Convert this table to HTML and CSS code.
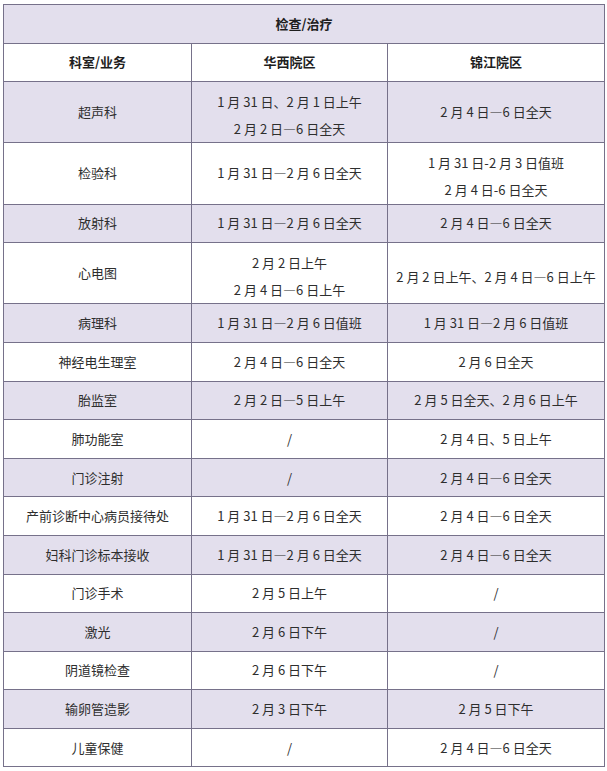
FILE: index.html
```html
<!DOCTYPE html>
<html lang="zh-CN">
<head>
<meta charset="utf-8">
<title>检查/治疗</title>
<link rel="stylesheet" href="styles.css">
</head>
<body>
<table class="sched">
  <colgroup>
    <col class="c1"><col class="c2"><col class="c3">
  </colgroup>
  <tr class="lav hd"><th colspan="3">检查/治疗</th></tr>
  <tr class="hd"><th>科室/业务</th><th>华西院区</th><th>锦江院区</th></tr>
  <tr class="lav dbl"><td>超声科</td><td class="two"><div>1 月 31 日、2 月 1 日上午</div><div>2 月 2 日—6 日全天</div></td><td>2 月 4 日—6 日全天</td></tr>
  <tr class="dbl"><td>检验科</td><td>1 月 31 日—2 月 6 日全天</td><td class="two"><div>1 月 31 日-2 月 3 日值班</div><div>2 月 4 日-6 日全天</div></td></tr>
  <tr class="lav"><td>放射科</td><td>1 月 31 日—2 月 6 日全天</td><td>2 月 4 日—6 日全天</td></tr>
  <tr class="dbl"><td>心电图</td><td class="two"><div>2 月 2 日上午</div><div>2 月 4 日—6 日上午</div></td><td class="low">2 月 2 日上午、2 月 4 日—6 日上午</td></tr>
  <tr class="lav"><td>病理科</td><td>1 月 31 日—2 月 6 日值班</td><td>1 月 31 日—2 月 6 日值班</td></tr>
  <tr><td>神经电生理室</td><td>2 月 4 日—6 日全天</td><td>2 月 6 日全天</td></tr>
  <tr class="lav"><td>胎监室</td><td>2 月 2 日—5 日上午</td><td>2 月 5 日全天、2 月 6 日上午</td></tr>
  <tr><td>肺功能室</td><td>/</td><td>2 月 4 日、5 日上午</td></tr>
  <tr class="lav"><td>门诊注射</td><td>/</td><td>2 月 4 日—6 日全天</td></tr>
  <tr><td>产前诊断中心病员接待处</td><td>1 月 31 日—2 月 6 日全天</td><td>2 月 4 日—6 日全天</td></tr>
  <tr class="lav"><td>妇科门诊标本接收</td><td>1 月 31 日—2 月 6 日全天</td><td>2 月 4 日—6 日全天</td></tr>
  <tr><td>门诊手术</td><td>2 月 5 日上午</td><td>/</td></tr>
  <tr class="lav"><td>激光</td><td>2 月 6 日下午</td><td>/</td></tr>
  <tr><td>阴道镜检查</td><td>2 月 6 日下午</td><td>/</td></tr>
  <tr class="lav"><td>输卵管造影</td><td>2 月 3 日下午</td><td>2 月 5 日下午</td></tr>
  <tr><td>儿童保健</td><td>/</td><td>2 月 4 日—6 日全天</td></tr>
</table>
</body>
</html>
```
FILE: styles.css
```css
html, body {
  margin: 0;
  padding: 0;
  background: #ffffff;
}
body {
  padding: 4px 0 0 3px;
  font-family: "Noto Sans CJK SC", "Noto Sans", sans-serif;
  font-size: 13px;
  color: #2e2e2e;
}
.sched {
  border-collapse: collapse;
  table-layout: fixed;
  width: 601px;
}
.c1 { width: 188px; }
.c2 { width: 196px; }
.c3 { width: 217px; }
.sched tr {
  height: 38.6px;
}
.sched tr.dbl {
  height: 61.2px;
}
.sched th,
.sched td {
  border: 1px solid #76718a;
  padding: 0 4px;
  text-align: center;
  vertical-align: middle;
  line-height: 20px;
  white-space: nowrap;
}
.sched th {
  font-weight: bold;
  color: #1e1e1e;
}
.lav {
  background: #e3dfed;
}
.sched td.two {
  padding-top: 6px;
}
.sched td.two div {
  line-height: 27px;
}
.sched td.low {
  padding-top: 8px;
}
```
